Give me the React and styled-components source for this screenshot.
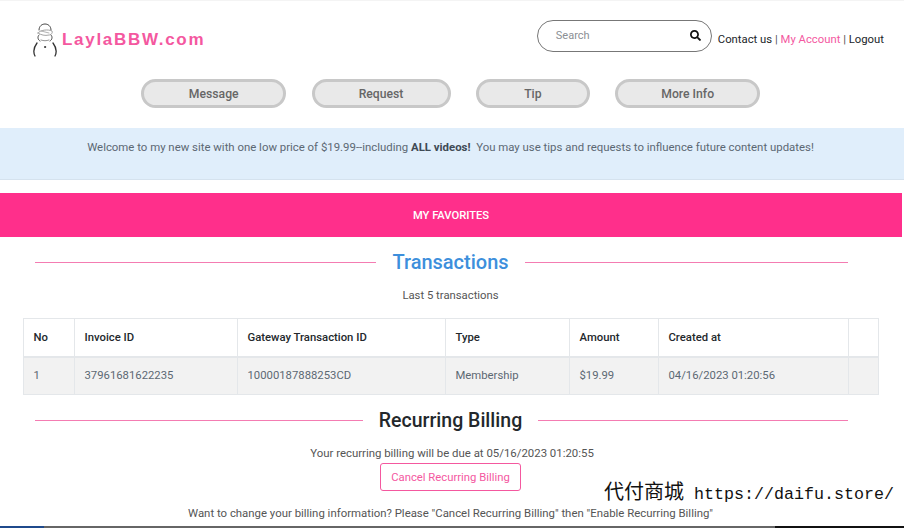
import React from "react";
import styled, { createGlobalStyle } from "styled-components";
import { FaSearch } from "react-icons/fa";

const GlobalStyle = createGlobalStyle`
  html, body {
    margin: 0;
    padding: 0;
    background: #fff;
  }
  body {
    font-family: Roboto, "Liberation Sans", sans-serif;
    color: #495057;
    font-size: 12px;
  }
`;

const Page = styled.div`
  position: relative;
  width: 904px;
  height: 528px;
  overflow: hidden;
  border-top: 1px solid #f4f4f4;
  box-sizing: border-box;
`;

const Header = styled.header`
  display: flex;
  align-items: flex-start;
  justify-content: space-between;
  height: 78px;
  padding: 20px 20px 0 32px;
  box-sizing: border-box;
`;

const Logo = styled.div`
  display: flex;
  align-items: center;
  gap: 4px;
  height: 36px;
`;

const LogoText = styled.span`
  font-family: "Liberation Sans", Arial, sans-serif;
  font-weight: 700;
  font-size: 17px;
  letter-spacing: 1.7px;
  color: #f4589f;
  margin-top: 1px;
`;

const HeaderRight = styled.div`
  display: flex;
  align-items: center;
  gap: 6px;
  margin-top: -1px;
`;

const SearchBox = styled.div`
  display: flex;
  align-items: center;
  justify-content: space-between;
  width: 175px;
  height: 32px;
  padding: 0 10px 2px 18px;
  box-sizing: border-box;
  border: 1px solid #777;
  border-radius: 16px;
  color: #8b8f94;
  font-size: 11px;
`;

const SearchIcon = styled(FaSearch)`
  color: #111;
  font-size: 11px;
`;

const TopLinks = styled.div`
  font-size: 11.3px;
  color: #555;
  margin-top: 7px;
`;

const TopLink = styled.span`
  color: ${(p) => (p.$pink ? "#f4589f" : "#212529")};
`;

const Nav = styled.nav`
  display: flex;
  justify-content: center;
  gap: 25.33px;
  height: 49px;
  padding-right: 2.6px;
`;

const NavButton = styled.div`
  display: flex;
  align-items: center;
  justify-content: center;
  width: ${(p) => p.$w}px;
  height: 29px;
  box-sizing: border-box;
  border: 3px solid #c8c8c8;
  border-radius: 15px;
  background: #e9e9e9;
  color: #666;
  font-size: 12.2px;
  font-weight: 500;
`;

const Welcome = styled.div`
  height: 52px;
  padding-top: 12px;
  box-sizing: border-box;
  background: #e0eefb;
  border-bottom: 1px solid #d5e2ee;
  text-align: center;
  color: #5c6873;
  font-size: 11.4px;
  line-height: 15px;
  white-space: pre;
  padding-right: 3px;

  b {
    color: #3f4a55;
    font-weight: 700;
  }
`;

const Favorites = styled.div`
  display: flex;
  align-items: center;
  justify-content: center;
  width: 902px;
  height: 44px;
  margin-top: 13px;
  background: #ff2f8b;
  color: #fff;
  font-size: 11.2px;
  font-weight: 500;
`;

const TitleRow = styled.div`
  display: flex;
  align-items: center;
  gap: 16px;
  margin-top: ${(p) => p.$top}px;
  padding: 0 56px 0 35px;
`;

const TitleLine = styled.div`
  flex: 1 1 ${(p) => (p.$long ? "18px" : "0")};
  height: 1px;
  background: #f47cb2;
`;

const Title = styled.h2`
  margin: 0;
  padding-top: ${(p) => p.$drop || 0}px;
  font-size: ${(p) => p.$size}px;
  line-height: 24px;
  font-weight: 500;
  color: ${(p) => p.$color};
`;

const Caption = styled.p`
  margin: 15px 0 0;
  text-align: center;
  font-size: 11.3px;
  line-height: 14px;
  color: #555;
  padding-right: 3px;
`;

const Table = styled.table`
  width: 855px;
  margin: 15px 0 0 23px;
  border-collapse: collapse;
  table-layout: fixed;
  font-size: 11.3px;
`;

const Th = styled.th`
  height: 38px;
  padding: 0 0 0 9.5px;
  box-sizing: border-box;
  border: 1px solid #e4e7ea;
  border-bottom-width: 2px;
  text-align: left;
  font-weight: 500;
  color: #23282c;
`;

const Td = styled.td`
  height: 38px;
  padding: 0 0 0 9.5px;
  box-sizing: border-box;
  border: 1px solid #e4e7ea;
  background: #f2f2f2;
  color: #5c6873;
`;

const Billing = styled.div`
  margin-top: 13px;
  text-align: center;
  font-size: 11.4px;
  line-height: 14px;
  color: #555;
`;

const CancelButton = styled.div`
  display: inline-block;
  margin-top: 3px;
  padding: 0 10px;
  height: 28px;
  line-height: 27px;
  box-sizing: border-box;
  border: 1px solid #f4589f;
  border-radius: 3px;
  color: #f4589f;
  font-size: 11.3px;
  margin-right: 3px;
`;

const BillingNote = styled.div`
  margin-top: 15px;
  padding-right: 3px;
`;

const Watermark = styled.div`
  position: absolute;
  left: 604px;
  top: 479px;
  font-family: "Noto Sans CJK SC", "Liberation Mono", monospace;
  font-size: 20px;
  line-height: 22px;
  color: #111;
  white-space: pre;
`;

const WatermarkUrl = styled.span`
  font-family: "Liberation Mono", monospace;
  font-size: 16.67px;
`;

const ScreenEdge = styled.div`
  position: absolute;
  left: 0;
  right: 0;
  bottom: 0;
  height: 2px;
  background: linear-gradient(
    to right,
    #1f4a8c 0 44px,
    #666 44px 775px,
    #111 775px
  );
`;

const navItems = [
  { label: "Message", w: 145 },
  { label: "Request", w: 139 },
  { label: "Tip", w: 114 },
  { label: "More Info", w: 145 },
];

const columns = [
  { label: "No", w: 51, value: "1" },
  { label: "Invoice ID", w: 163, value: "37961681622235" },
  { label: "Gateway Transaction ID", w: 208, value: "10000187888253CD" },
  { label: "Type", w: 124, value: "Membership" },
  { label: "Amount", w: 89, value: "$19.99" },
  { label: "Created at", w: 190, value: "04/16/2023 01:20:56" },
  { label: "", w: 30, value: "" },
];

function SnowmanLogo() {
  return (
    <svg width="26" height="36" viewBox="0 0 26 36" fill="none" stroke="#333" strokeWidth="0.9" strokeLinecap="round">
      <path d="M7 9c0-4 3-6 6-6s6 2 6 6" />
      <path d="M6 12c2-3 10-4 14-2 1 2-1 4-3 4-4 1-8 0-11-2z" stroke="#999" />
      <path d="M9 10l8 2" stroke="#aaa" />
      <path d="M7 14c-2 2-1 5 1 6M19 14c2 2 1 5-1 6" />
      <path d="M5 22C2 26 1 31 3 35" strokeWidth="1.3" />
      <path d="M21 22c3 4 4 9 2 13" strokeWidth="1.3" />
      <circle cx="13" cy="26" r="0.6" fill="#555" />
      <path d="M9 19c3 1 5 1 8 0" stroke="#888" />
    </svg>
  );
}

export default function App() {
  return (
    <>
      <GlobalStyle />
      <Page>
        <Header>
          <Logo>
            <SnowmanLogo />
            <LogoText>LaylaBBW.com</LogoText>
          </Logo>
          <HeaderRight>
            <SearchBox>
              Search
              <SearchIcon />
            </SearchBox>
            <TopLinks>
              <TopLink>Contact us</TopLink> | <TopLink $pink>My Account</TopLink> | <TopLink>Logout</TopLink>
            </TopLinks>
          </HeaderRight>
        </Header>

        <Nav>
          {navItems.map((item) => (
            <NavButton key={item.label} $w={item.w}>
              {item.label}
            </NavButton>
          ))}
        </Nav>

        <Welcome>
          Welcome to my new site with one low price of $19.99--including <b>ALL videos!</b>  You may use tips and requests to influence future content updates!
        </Welcome>

        <Favorites>MY FAVORITES</Favorites>

        <section>
          <TitleRow $top={13}>
            <TitleLine $long />
            <Title $size={20} $color="#3d8fdc">Transactions</Title>
            <TitleLine />
          </TitleRow>
          <Caption>Last 5 transactions</Caption>
          <Table>
            <colgroup>
              {columns.map((c) => (
                <col key={c.label || "blank"} width={c.w} />
              ))}
            </colgroup>
            <thead>
              <tr>
                {columns.map((c) => (
                  <Th key={c.label || "blank"}>{c.label}</Th>
                ))}
              </tr>
            </thead>
            <tbody>
              <tr>
                {columns.map((c) => (
                  <Td key={c.label || "blank"}>{c.value}</Td>
                ))}
              </tr>
            </tbody>
          </Table>
        </section>

        <section>
          <TitleRow $top={12}>
            <TitleLine $long />
            <Title $size={19.5} $drop={2} $color="#23282c">Recurring Billing</Title>
            <TitleLine />
          </TitleRow>
          <Billing>
            <div>Your recurring billing will be due at 05/16/2023 01:20:55</div>
            <CancelButton>Cancel Recurring Billing</CancelButton>
            <BillingNote>
              Want to change your billing information? Please "Cancel Recurring Billing" then "Enable Recurring Billing"
            </BillingNote>
          </Billing>
        </section>

        <Watermark>
          代付商城<WatermarkUrl> https://daifu.store/</WatermarkUrl>
        </Watermark>
        <ScreenEdge />
      </Page>
    </>
  );
}
